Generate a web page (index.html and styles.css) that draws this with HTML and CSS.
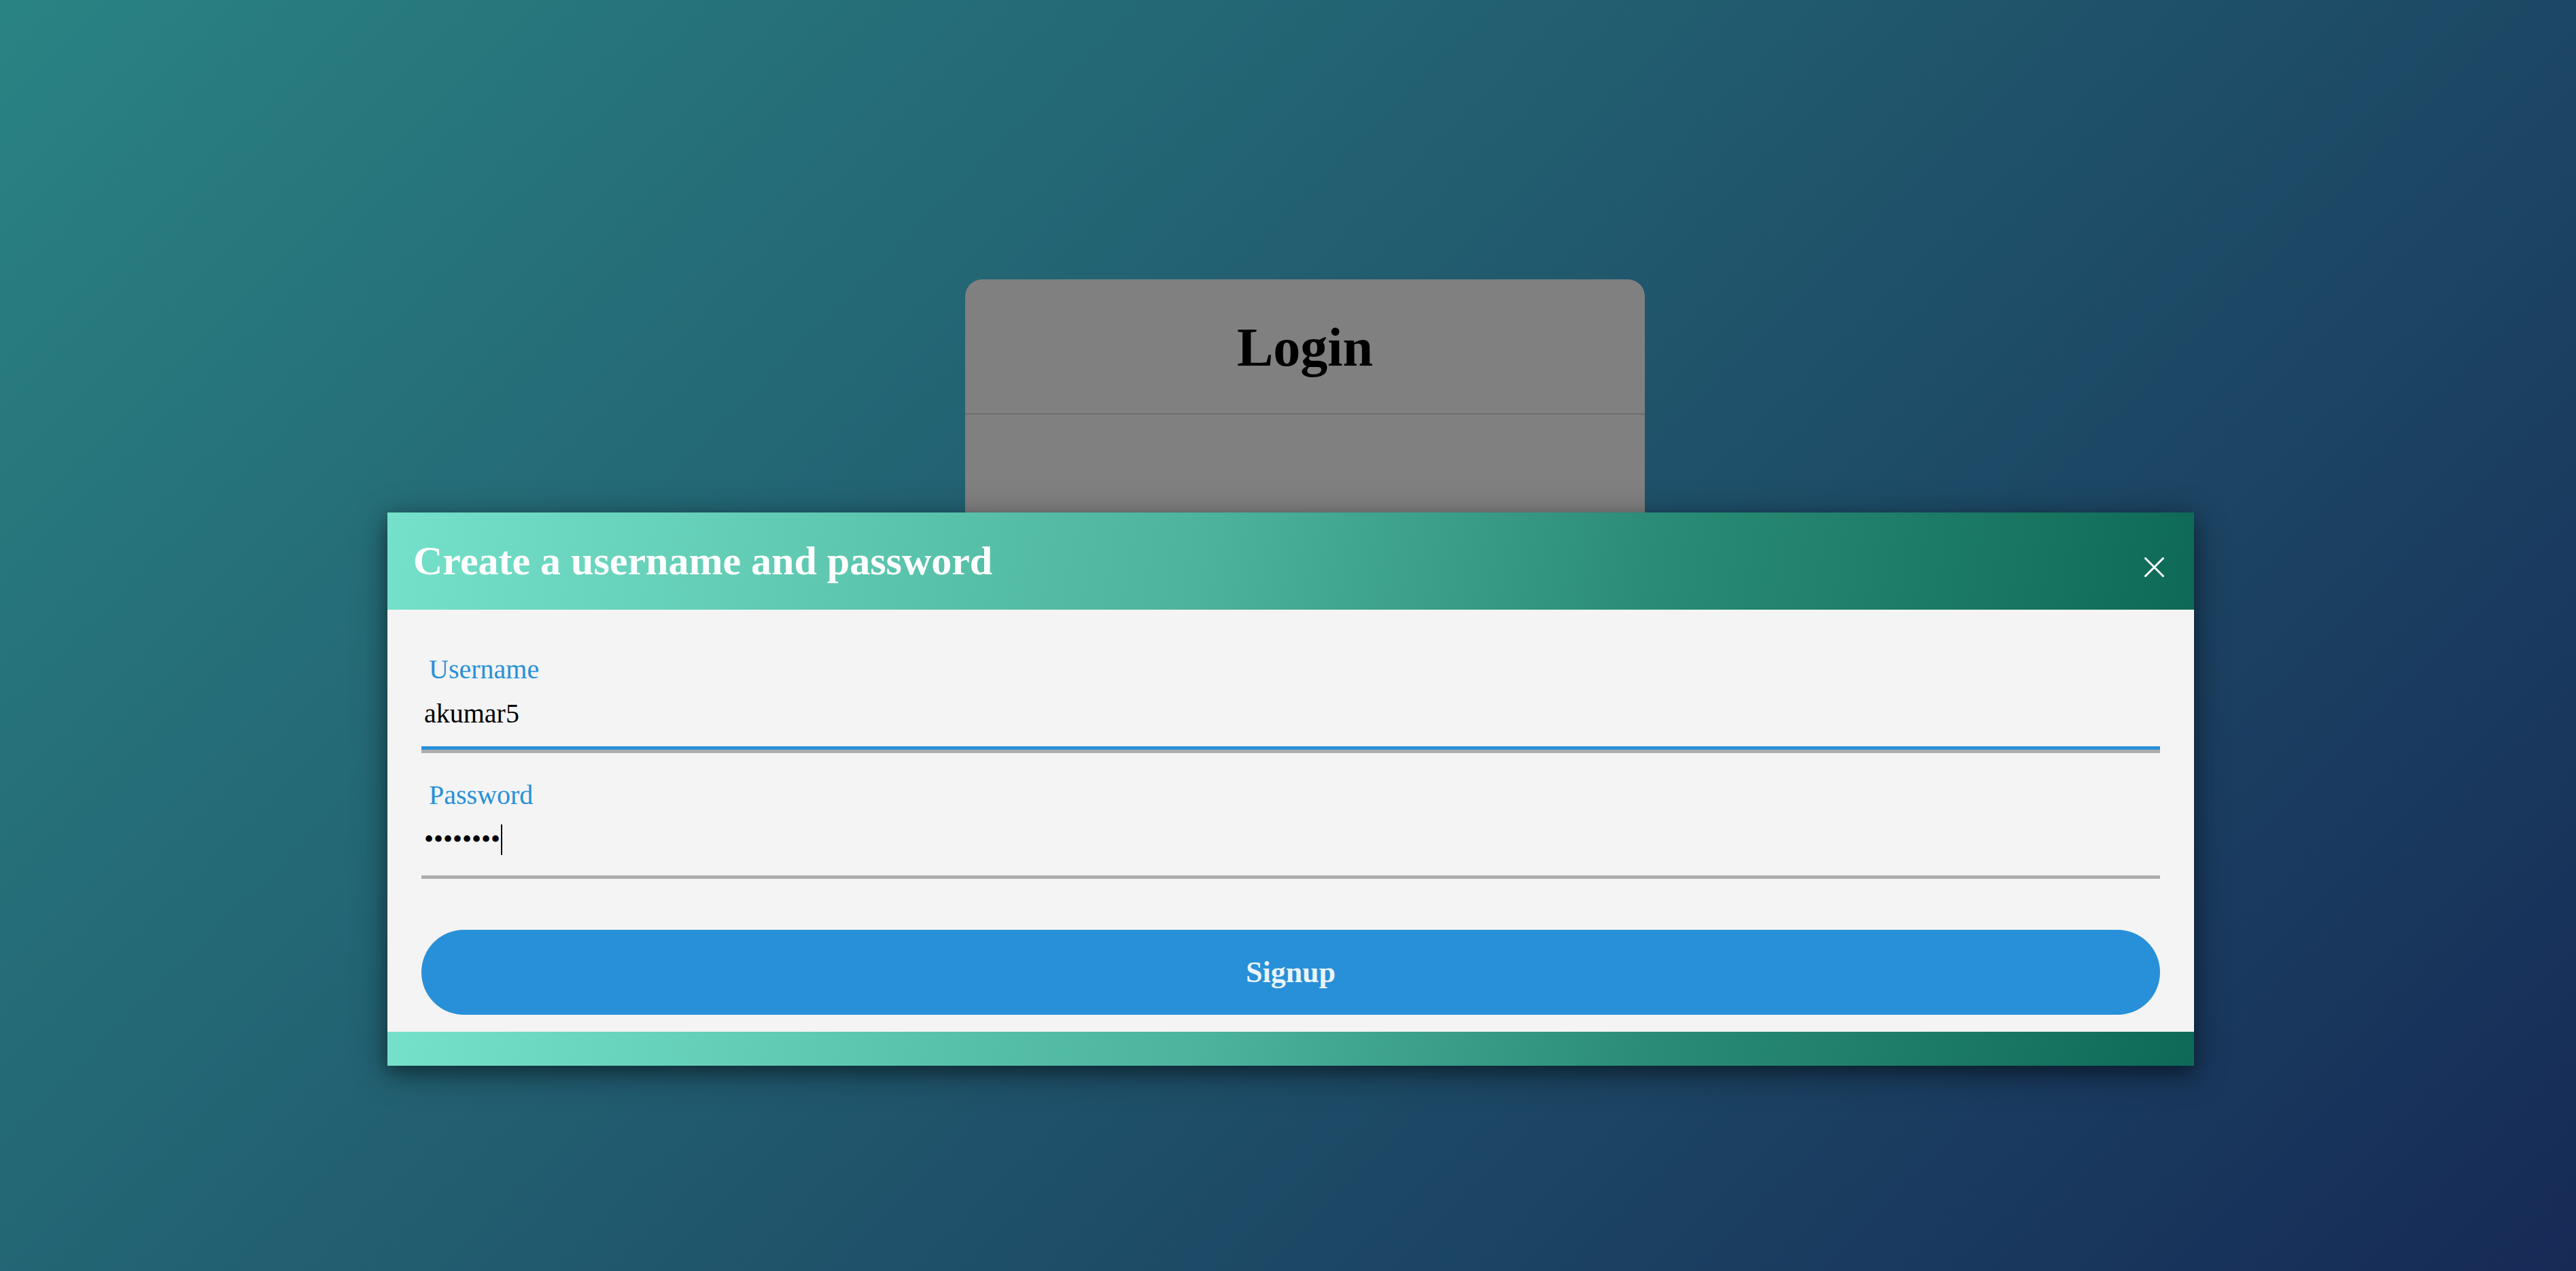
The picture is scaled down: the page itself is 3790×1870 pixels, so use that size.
FILE: index.html
```html
<!DOCTYPE html>
<html lang="en">
<head>
<meta charset="utf-8">
<title>Login</title>
<link rel="stylesheet" href="styles.css">
</head>
<body>
<main class="page">
  <section class="login-card">
    <header class="login-head">
      <h1 class="login-title">Login</h1>
    </header>
    <div class="login-body"></div>
  </section>

  <div class="modal" role="dialog" aria-labelledby="modal-title">
    <header class="modal-head">
      <h2 id="modal-title" class="modal-title">Create a username and password</h2>
      <span class="modal-close" aria-label="Close">
        <svg viewBox="0 0 29 29" width="29" height="29" aria-hidden="true">
          <path d="M1.5 1.5 L27.5 27.5 M27.5 1.5 L1.5 27.5" stroke="#ffffff" stroke-width="3" fill="none" stroke-linecap="square"/>
        </svg>
      </span>
    </header>
    <div class="modal-body">
      <div class="field">
        <label class="field-label">Username</label>
        <div class="field-input is-focused">akumar5</div>
      </div>
      <div class="field">
        <label class="field-label">Password</label>
        <div class="field-input"><span class="dots">••••••••</span><span class="caret"></span></div>
      </div>
      <button class="signup-btn" type="button">Signup</button>
    </div>
    <footer class="modal-foot"></footer>
  </div>
</main>
</body>
</html>
```

FILE: styles.css
```css
html, body {
  margin: 0;
  padding: 0;
}

body {
  width: 3790px;
  height: 1870px;
  overflow: hidden;
  background: linear-gradient(135deg, #2a8383 0%, #162a56 100%);
  font-family: "Liberation Serif", "Times New Roman", serif;
}

.page {
  position: relative;
  width: 100%;
  height: 100%;
  padding-top: 411px;
  box-sizing: border-box;
}

.login-card {
  width: 1000px;
  margin-left: 1420px;
  background: #808080;
  border-radius: 25px;
}

.login-head {
  padding: 55px 0 51px;
  border-bottom: 2px solid #6c6c6c;
  text-align: center;
}

.login-title {
  margin: 0;
  font-size: 80px;
  font-weight: bold;
  line-height: normal;
  color: #000;
}

.login-body {
  height: 260px;
}

.modal {
  position: absolute;
  left: 570px;
  top: 754px;
  width: 2658px;
  background: #f4f4f4;
  box-shadow: 0 10px 25px rgba(0, 0, 0, 0.35), 0 10px 50px rgba(0, 0, 0, 0.3);
}

.modal-head {
  position: relative;
  height: 143px;
  display: flex;
  align-items: center;
  padding-left: 38px;
  background: linear-gradient(100deg, #75e1ca 0%, #4cb39c 45%, #2a8c76 70%, #0e6a56 100%);
}

.modal-title {
  margin: 0;
  font-size: 60px;
  font-weight: bold;
  line-height: normal;
  color: #ffffff;
}

.modal-close {
  position: absolute;
  right: 44px;
  top: 66px;
  width: 29px;
  height: 29px;
  display: block;
}

.modal-close svg {
  display: block;
}

.modal-body {
  padding: 65px 50px 25px 50px;
  display: flex;
  flex-direction: column;
}

.field {
  display: flex;
  flex-direction: column;
}

.field + .field {
  margin-top: 39px;
}

.field-label {
  display: block;
  padding-left: 11px;
  font-size: 40px;
  line-height: 46px;
  color: #2890d8;
}

.field-input {
  margin-top: 19px;
  padding: 0 4px 30px 4px;
  font-size: 40px;
  line-height: 46px;
  color: #000;
  border-bottom: 5px solid #adadad;
  display: flex;
  align-items: center;
}

.field-input.is-focused {
  box-shadow: inset 0 -5px 0 #2890d8;
}

.caret {
  display: inline-block;
  width: 2px;
  height: 45px;
  margin-left: 1px;
  background: #000;
}

.signup-btn {
  margin-top: 75px;
  height: 125px;
  width: 100%;
  border: none;
  border-radius: 63px;
  background: #2890d8;
  color: #eaf4fb;
  font-family: "Liberation Serif", "Times New Roman", serif;
  font-size: 44px;
  font-weight: bold;
  padding: 0;
  cursor: pointer;
}

.modal-foot {
  height: 50px;
  background: linear-gradient(100deg, #75e1ca 0%, #4cb39c 45%, #2a8c76 70%, #0e6a56 100%);
}
```
